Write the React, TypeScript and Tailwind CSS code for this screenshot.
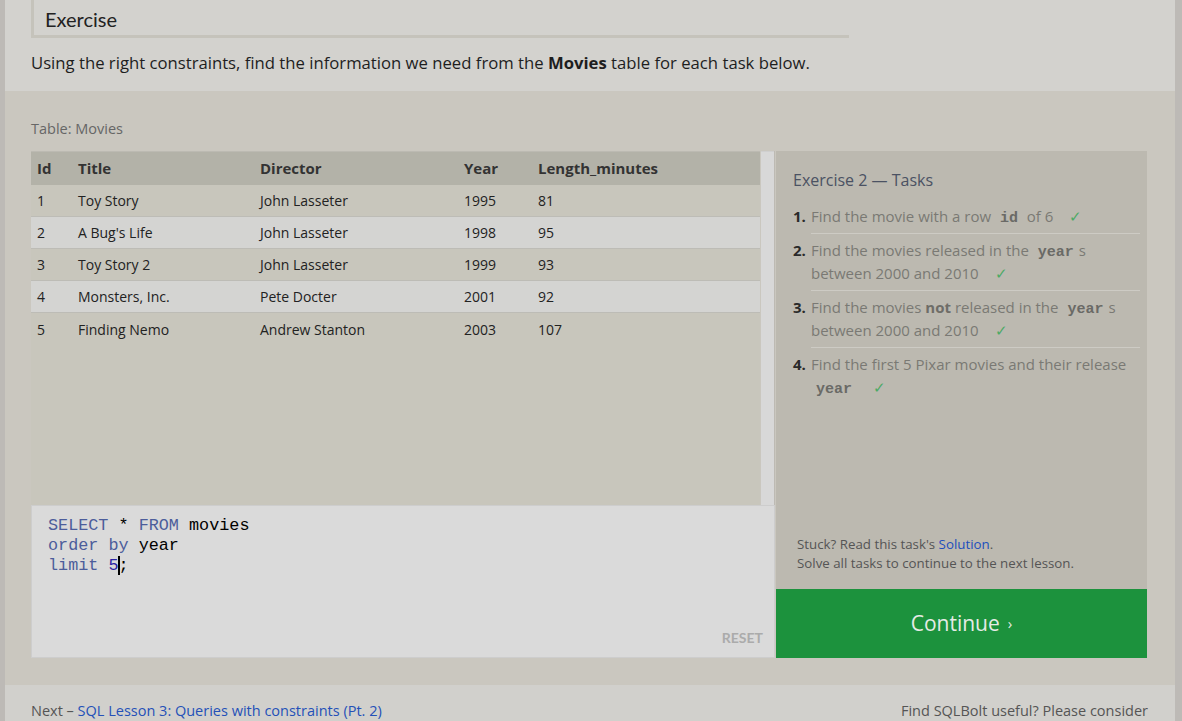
import React from "react";

const rows = [
  { id: 1, title: "Toy Story", director: "John Lasseter", year: 1995, len: 81 },
  { id: 2, title: "A Bug's Life", director: "John Lasseter", year: 1998, len: 95 },
  { id: 3, title: "Toy Story 2", director: "John Lasseter", year: 1999, len: 93 },
  { id: 4, title: "Monsters, Inc.", director: "Pete Docter", year: 2001, len: 92 },
  { id: 5, title: "Finding Nemo", director: "Andrew Stanton", year: 2003, len: 107 },
];

const sans = { fontFamily: "'Open Sans', Lato, sans-serif" };
const lato = { fontFamily: "Lato, 'Open Sans', sans-serif" };

function Code({ children }: { children: React.ReactNode }) {
  return (
    <code className="px-[5px] leading-none font-bold text-[#6a6a66] font-['Liberation_Mono',monospace] text-[15px]">
      {children}
    </code>
  );
}

function Check() {
  return <span className="ml-3 text-[#4caa66]">✓</span>;
}

function Task({ n, children, last }: { n: number; children: React.ReactNode; last?: boolean }) {
  return (
    <li className="flex">
      <span className="w-[18px] shrink-0 font-bold text-[#2a2a2a]">{n}.</span>
      <div className={`flex-1 pb-[5px] mb-[5px] ${last ? "" : "border-b border-[#cdcbc4]"}`}>{children}</div>
    </li>
  );
}

export default function App() {
  return (
    <div className="min-h-screen bg-[#bdbab6] px-[5px]" style={sans}>
      <div className="w-[1170px]">
        {/* intro */}
        <div className="bg-[#d3d2ce] h-[91px] px-[26px]">
          <div
            className="w-[818px] h-[38px] border-l-[3px] border-b-[3px] border-[#c5c3bb] pl-[11px] pt-[4px] text-[20px] text-[#222]"
            style={lato}
          >
            Exercise
          </div>
          <p className="mt-[12px] text-[16.7px] text-[#1e1e1e]">
            Using the right constraints, find the information we need from the <b>Movies</b> table for each task below.
          </p>
        </div>

        {/* exercise */}
        <div className="bg-[#cac7bf] px-[26px] pt-[27px] pb-[27px]">
          <div className="text-[14.5px] text-[#666] leading-[22px] mb-[11px]">Table: Movies</div>
          <div className="flex h-[507px]">
            <div className="w-[744px] flex flex-col">
              <div className="flex h-[354px]">
                <div className="w-[729px] bg-[#c8c6bc] border-t border-[#bcbab2]">
                  <div className="flex h-[33px] items-center bg-[#b3b2a8] text-[15px] font-bold text-[#333]">
                    <div className="w-[47px] pl-[6px]">Id</div>
                    <div className="w-[182px]">Title</div>
                    <div className="w-[204px]">Director</div>
                    <div className="w-[74px]">Year</div>
                    <div>Length_minutes</div>
                  </div>
                  {rows.map((r, i) => (
                    <div
                      key={r.id}
                      className={`flex h-[32px] items-center text-[14px] text-[#222] ${
                        i < rows.length - 1 ? "border-b border-[#bdbcb6]" : ""
                      } ${i % 2 === 1 ? "bg-[#d4d4d2]" : "bg-[#c8c6bc]"}`}
                    >
                      <div className="w-[47px] pl-[6px]">{r.id}</div>
                      <div className="w-[182px]">{r.title}</div>
                      <div className="w-[204px]">{r.director}</div>
                      <div className="w-[74px]">{r.year}</div>
                      <div>{r.len}</div>
                    </div>
                  ))}
                </div>
                <div className="w-[1px]" />
                <div className="w-[13px] bg-[#d8d8d8] border-t border-[#cfcfcf]" />
                <div className="w-[1px] bg-[#bdbab3]" />
              </div>
              <div className="relative flex-1 bg-[#dadada] border border-[#cdcdcd] pl-[16px] pt-[10px] text-[16.8px] leading-[20px] font-['Liberation_Mono',monospace]">
                <div>
                  <span className="text-[#4c5d9b]">SELECT</span> * <span className="text-[#4c5d9b]">FROM</span> movies
                </div>
                <div>
                  <span className="text-[#4c5d9b]">order by</span> year
                </div>
                <div>
                  <span className="text-[#4c5d9b]">limit</span>{" "}
                  <span className="text-[#2b22a3]">5</span>
                  <span className="inline-block w-[2px] h-[19px] bg-black align-middle -ml-[1px] mr-[-1px]" />;
                </div>
                <div className="absolute right-[11px] bottom-[9px] text-[14px] font-bold text-[#ababab]" style={lato}>
                  RESET
                </div>
              </div>
            </div>

            <div className="ml-[1px] w-[371px] flex flex-col">
              <div className="flex-1 bg-[#bcb9b0] pl-[17px] pr-[7px] pt-[17px] flex flex-col">
                <div className="text-[16px] leading-[24px] text-[#4b5263] mb-[13px]">Exercise 2 — Tasks</div>
                <ol className="text-[15px] leading-[23px] text-[#7a7974]">
                  <Task n={1}>
                    Find the movie with a row <Code>id</Code> of 6 <Check />
                  </Task>
                  <Task n={2}>
                    Find the movies released in the <Code>year</Code>s between 2000 and 2010 <Check />
                  </Task>
                  <Task n={3}>
                    Find the movies <b className="text-[#6e6d68]">not</b> released in the <Code>year</Code>s between 2000 and 2010 <Check />
                  </Task>
                  <Task n={4} last>
                    Find the first 5 Pixar movies and their release <Code>year</Code> <Check />
                  </Task>
                </ol>
                <div className="mt-auto pl-[4px] pb-[16px] text-[13.3px] leading-[19px] text-[#555]">
                  <div>
                    Stuck? Read this task's <span className="text-[#1d4fbd]">Solution</span>.
                  </div>
                  <div>Solve all tasks to continue to the next lesson.</div>
                </div>
              </div>
              <div className="h-[69px] bg-[#1c923d] flex items-center justify-center text-[21px] text-[#e6ebe6]">
                Continue <span className="ml-[8px] text-[15px]">›</span>
              </div>
            </div>
          </div>
        </div>

        {/* footer */}
        <div className="bg-[#d1d0cc] h-[36px] px-[26px] pt-[16px] flex justify-between text-[14.5px] leading-[20px]">
          <div className="text-[#555]">
            Next – <span className="text-[#2450b8]">SQL Lesson 3: Queries with constraints (Pt. 2)</span>
          </div>
          <div className="text-[#555] mr-[1px]">Find SQLBolt useful? Please consider</div>
        </div>
      </div>
    </div>
  );
}
